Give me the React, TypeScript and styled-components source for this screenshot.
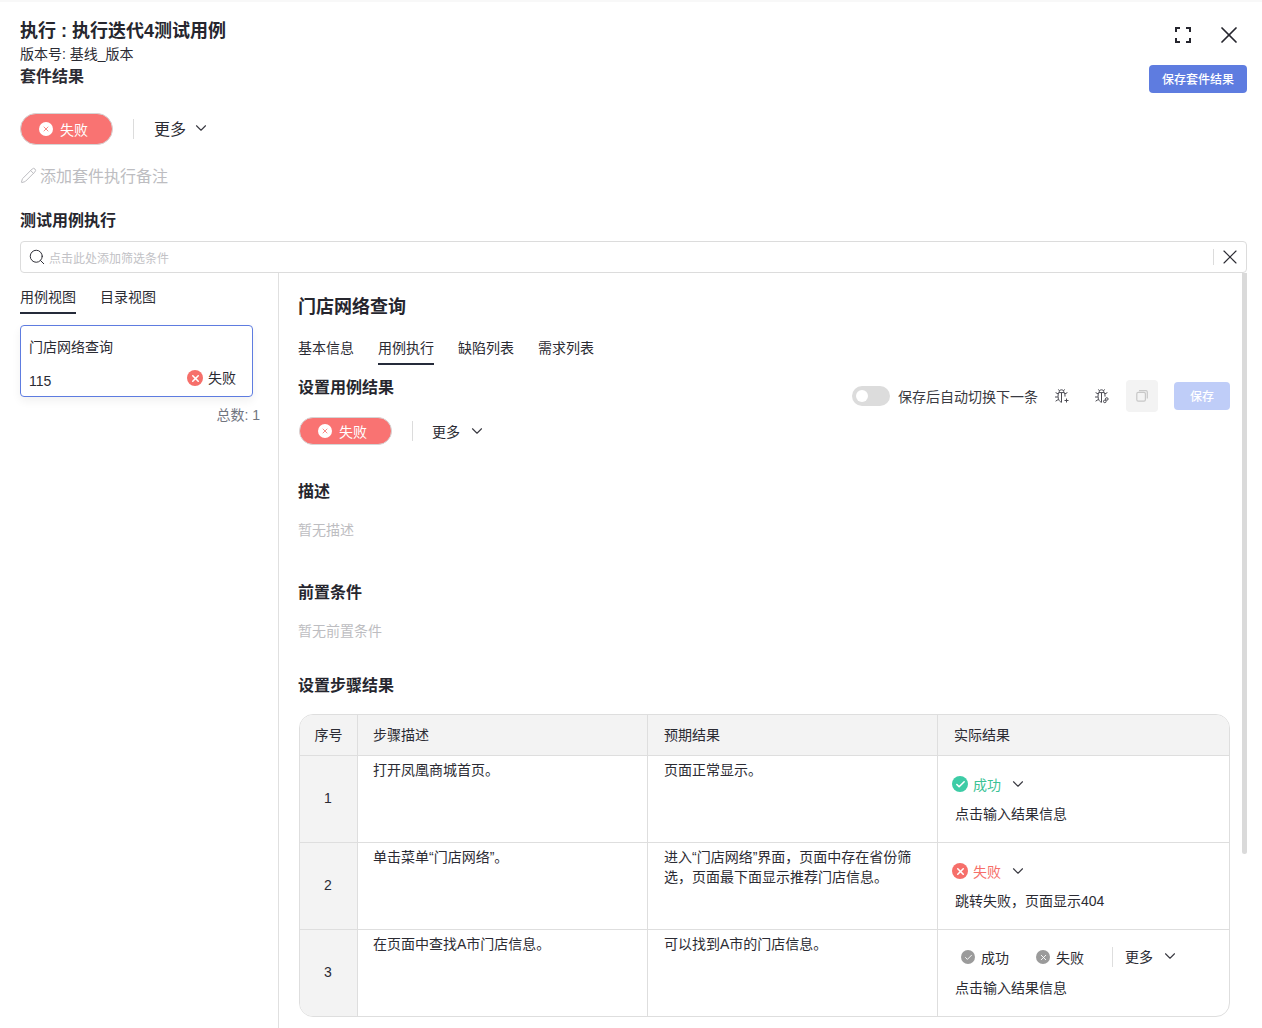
import React from "react";
import styled, { createGlobalStyle } from "styled-components";
import { Check, ChevronDown, Pencil, Search, X } from "lucide-react";

const Global = createGlobalStyle`
  html, body { margin: 0; padding: 0; background: #fff; }
  body { font-family: "Liberation Sans", "Noto Sans CJK SC", sans-serif; color: #2b2b33; }
  * { box-sizing: border-box; }
`;

const Page = styled.div`
  width: 1262px;
  height: 1028px;
  overflow: hidden;
  display: flex;
  flex-direction: column;
  padding: 20px 15px 0 20px;
  border-top: 2px solid #f8f8f8;
`;
const Header = styled.header`
  display: flex;
  justify-content: space-between;
  height: 91px;
`;
const TitleBlock = styled.div`
  display: flex;
  flex-direction: column;
`;
const Title = styled.h1`
  margin: 0;
  font-size: 18px;
  line-height: 18px;
  font-weight: 700;
  color: #26262e;
`;
const Version = styled.div`
  font-size: 14px;
  line-height: 18px;
  margin-top: 5px;
  color: #2b2b33;
`;
const SuiteHeading = styled.div`
  font-size: 16px;
  line-height: 22px;
  font-weight: 700;
  margin-top: 3px;
`;
const HeaderActions = styled.div`
  display: flex;
  flex-direction: column;
  align-items: flex-end;
`;
const WindowIcons = styled.div`
  display: flex;
  align-items: center;
  gap: 23px;
  height: 28px;
  margin: -1px 4px 16px 0;
`;
const PrimaryButton = styled.button<{ $muted?: boolean }>`
  border: none;
  border-radius: 4px;
  height: 28px;
  padding: 0 ${(p) => (p.$muted ? "16px" : "13px")} 2px;
  font: inherit;
  font-size: 12px;
  font-weight: 500;
  color: #fff;
  background: ${(p) => (p.$muted ? "#bfcdf8" : "#5e7ce0")};
`;
const ResultRow = styled.div<{ $compact?: boolean }>`
  display: flex;
  align-items: center;
  height: ${(p) => (p.$compact ? "28px" : "32px")};
  margin-left: ${(p) => (p.$compact ? "1px" : "0")};
`;
const FailPill = styled.div`
  width: 93px;
  height: 100%;
  border-radius: 16px;
  background: #f97372;
  border: 1px solid #d5d5d5;
  color: #fff;
  font-size: 14px;
  display: flex;
  align-items: center;
  padding-left: 18px;
  gap: 7px;
`;
const Divider = styled.div<{ $height: number; $right?: number }>`
  width: 1px;
  height: ${(p) => p.$height}px;
  background: #dcdcdc;
  margin: 0 ${(p) => p.$right ?? 20}px 0 20px;
`;
const More = styled.div<{ $size: number; $gap: number; $lift?: number }>`
  display: flex;
  align-items: center;
  gap: ${(p) => p.$gap}px;
  font-size: ${(p) => p.$size}px;
  color: #2b2b33;
  margin-bottom: ${(p) => p.$lift ?? 0}px;
`;
const NoteRow = styled.div`
  display: flex;
  align-items: center;
  gap: 3px;
  height: 24px;
  margin-top: 18px;
  font-size: 16px;
  color: #bdbdc1;
`;
const SectionTitle = styled.h2<{ $top?: number }>`
  margin: ${(p) => p.$top ?? 0}px 0 0;
  font-size: 16px;
  line-height: 24px;
  font-weight: 700;
  color: #26262e;
`;
const FilterBar = styled.div`
  height: 32px;
  margin-top: 8px;
  display: flex;
  align-items: center;
  border: 1px solid #dcdcdc;
  border-radius: 4px;
  padding: 0 4px 0 7px;
  gap: 3px;
  font-size: 12px;
  color: #c2c2c6;
`;
const FilterText = styled.span`
  flex: 1;
`;
const FilterClear = styled.div`
  height: 16px;
  border-left: 1px solid #dcdcdc;
  padding-left: 4px;
  display: flex;
  align-items: center;
`;
const Body = styled.div`
  flex: 1;
  display: flex;
  min-height: 0;
`;
const LeftPanel = styled.aside`
  width: 259px;
  flex: none;
  border-right: 1px solid #e0e0e0;
  padding-top: 14px;
`;
const TabBar = styled.div<{ $gap: number }>`
  display: flex;
  gap: ${(p) => p.$gap}px;
  font-size: 14px;
`;
const Tab = styled.div<{ $active?: boolean }>`
  height: 27px;
  line-height: 20px;
  color: #2b2b33;
  border-bottom: 2px solid ${(p) => (p.$active ? "#252b3a" : "transparent")};
`;
const CaseCard = styled.div`
  width: 233px;
  height: 72px;
  margin-top: 11px;
  border: 1px solid #5e7ce0;
  border-radius: 4px;
  padding: 11px 8px 0;
  font-size: 14px;
  box-shadow: 0 4px 10px rgba(0, 0, 0, 0.06);
`;
const CaseName = styled.div`
  line-height: 20px;
`;
const CaseMeta = styled.div`
  display: flex;
  justify-content: space-between;
  align-items: flex-start;
  margin-top: 11px;
  padding-right: 8px;
  line-height: 20px;
`;
const CaseId = styled.span`
  margin-top: 3px;
`;
const StatusText = styled.div<{ $color?: string; $gap?: number }>`
  display: flex;
  align-items: center;
  gap: ${(p) => p.$gap ?? 5}px;
  font-size: 14px;
  color: ${(p) => p.$color ?? "#2b2b33"};
`;
const Total = styled.div`
  width: 240px;
  text-align: right;
  margin-top: 9px;
  font-size: 14px;
  line-height: 18px;
  color: #71757f;
`;
const RightPanel = styled.main`
  position: relative;
  flex: 1;
  min-width: 0;
  padding: 22px 17px 0 19px;
`;
const ScrollThumb = styled.div`
  position: absolute;
  top: 0;
  right: 0;
  width: 5px;
  height: 581px;
  background: #dadada;
  border-radius: 0 0 3px 3px;
`;
const CaseTitle = styled.h2`
  margin: 0;
  font-size: 18px;
  line-height: 24px;
  font-weight: 700;
  color: #26262e;
`;
const DetailTabs = styled.div`
  margin-top: 19px;
`;
const ResultHead = styled.div`
  display: flex;
  justify-content: space-between;
  margin-top: 11px;
  height: 41px;
`;
const Toolbar = styled.div`
  display: flex;
  align-items: center;
  height: 32px;
  margin-top: 4px;
`;
const ToggleTrack = styled.div`
  position: relative;
  width: 38px;
  height: 20px;
  border-radius: 10px;
  background: #dcdcdc;
  margin-right: 8px;
`;
const ToggleKnob = styled.div`
  position: absolute;
  left: 4px;
  top: 4px;
  width: 12px;
  height: 12px;
  border-radius: 50%;
  background: #fff;
`;
const ToggleLabel = styled.span`
  font-size: 14px;
  color: #3a3a42;
  margin-right: 16px;
`;
const IconSlot = styled.div<{ $right: number }>`
  width: 16px;
  margin-right: ${(p) => p.$right}px;
  display: flex;
  justify-content: center;
  align-items: center;
`;
const CopyButton = styled.div`
  width: 32px;
  height: 32px;
  border-radius: 4px;
  background: #f3f3f3;
  display: flex;
  align-items: center;
  justify-content: center;
  margin-right: 16px;
`;
const EmptyText = styled.div`
  margin-top: 16px;
  font-size: 14px;
  line-height: 20px;
  color: #bdbdc1;
`;
const StepTable = styled.div`
  margin: 16px 0 0 1px;
  width: 931px;
  height: 303px;
  border: 1px solid #dedede;
  border-radius: 14px;
  overflow: hidden;
  display: grid;
  grid-template-columns: 58px 290px 290px 1fr;
  grid-template-rows: 41px repeat(3, 87px);
  font-size: 14px;
`;
const HeadCell = styled.div<{ $center?: boolean; $last?: boolean; $pad?: number }>`
  background: #f3f3f3;
  border-bottom: 1px solid #dedede;
  border-right: ${(p) => (p.$last ? "none" : "1px solid #dedede")};
  display: flex;
  align-items: center;
  justify-content: ${(p) => (p.$center ? "center" : "flex-start")};
  padding-left: ${(p) => (p.$center ? 0 : p.$pad ?? 15)}px;
  padding-bottom: 2px;
`;
const IndexCell = styled.div<{ $last?: boolean }>`
  background: #f3f3f3;
  border-right: 1px solid #dedede;
  border-bottom: ${(p) => (p.$last ? "none" : "1px solid #dedede")};
  display: flex;
  align-items: center;
  justify-content: center;
  font-size: 14px;
  padding: 0 1px 3px 0;
`;
const TextCell = styled.div<{ $last?: boolean; $pad?: number }>`
  border-right: 1px solid #dedede;
  border-bottom: ${(p) => (p.$last ? "none" : "1px solid #dedede")};
  padding: 4px 15px 0 ${(p) => p.$pad ?? 15}px;
  line-height: 20px;
`;
const ActualCell = styled.div<{ $last?: boolean }>`
  border-bottom: ${(p) => (p.$last ? "none" : "1px solid #dedede")};
  padding-left: 14px;
  display: flex;
  flex-direction: column;
`;
const ActualStatus = styled.div`
  height: 20px;
  margin-top: 18px;
  display: flex;
  align-items: center;
  gap: 8px;
`;
const ActualNote = styled.div<{ $top?: number }>`
  margin: ${(p) => p.$top ?? 10}px 0 0 3px;
  line-height: 20px;
  font-size: 14px;
  color: #2b2b33;
`;
const ChoiceRow = styled.div`
  display: flex;
  align-items: center;
  height: 20px;
  margin-top: 17px;
  padding-left: 9px;
  font-size: 14px;
`;
const ChoiceDivider = styled.div`
  width: 1px;
  height: 20px;
  background: #dedede;
  margin: 0 12px 0 28px;
`;
const ChoiceGap = styled.div`
  width: 27px;
`;

const Dot = styled.span<{ $bg: string; $size: number }>`
  width: ${(p) => p.$size}px;
  height: ${(p) => p.$size}px;
  flex: none;
  border-radius: 50%;
  background: ${(p) => p.$bg};
  display: inline-flex;
  align-items: center;
  justify-content: center;
`;

const FullscreenIcon = () => (
  <svg width="18" height="18" viewBox="0 0 18 18" fill="none" stroke="#26262e" strokeWidth="2">
    <path d="M2 6V2H6M12 2H16V6M16 12V16H12M6 16H2V12" />
  </svg>
);

const BugBase = ({ badge }: { badge: "plus" | "link" }) => (
  <svg width="16" height="16" viewBox="0 0 16 16" fill="none" stroke="#4a4a52" strokeWidth="1">
    <path d="M5.2 4.4C5.2 2.8 6.2 1.8 7.5 1.8S9.8 2.8 9.8 4.4" />
    <path d="M4.6 4.6H10.4C11 6 11.1 7 11 8.6M4.6 4.6C3.8 7 3.8 10.6 5.2 12.6 6 13.6 6.8 14.2 8 14.2M7.5 5V14" />
    <path d="M4.4 1.4 5.6 3M10.6 1.4 9.4 3M1.6 4.6 4.4 6M13.4 4.6 10.6 6M1 9H3.9M1.6 13.2 4.4 11.4" />
    {badge === "plus" ? (
      <path d="M12.5 10.5V14.5M10.5 12.5H14.5" />
    ) : (
      <>
        <circle cx="12.8" cy="11" r="1.3" />
        <circle cx="10.8" cy="13.4" r="1.3" />
      </>
    )}
  </svg>
);

const CopyIcon = () => (
  <svg width="12" height="12" viewBox="0 0 12 12" fill="none" stroke="#c8c8c8" strokeWidth="1.2">
    <rect x="0.8" y="2.4" width="8.6" height="8.8" rx="1.4" />
    <path d="M3 .7H10A1.4 1.4 0 0 1 11.3 2V8.6" />
  </svg>
);

const FailMark = ({ size = 16 }: { size?: number }) => (
  <Dot $bg="#f66f6a" $size={size}>
    <X size={size - 5} color="#fff" strokeWidth={3.4} />
  </Dot>
);
const PillMark = ({ size = 14 }: { size?: number }) => (
  <Dot $bg="#fff" $size={size}>
    <X size={size - 6} color="#f66f6a" strokeWidth={2.4} />
  </Dot>
);
const Chevron = () => <ChevronDown size={18} color="#3a3a42" strokeWidth={1.5} />;

const Pill = () => (
  <FailPill>
    <PillMark />
    失败
  </FailPill>
);

const steps = [
  { id: 1, desc: "打开凤凰商城首页。", expect: "页面正常显示。" },
  { id: 2, desc: "单击菜单“门店网络”。", expect: "进入“门店网络”界面，页面中存在省份筛选，页面最下面显示推荐门店信息。" },
  { id: 3, desc: "在页面中查找A市门店信息。", expect: "可以找到A市的门店信息。" },
];

const Actual = ({ id }: { id: number }) => {
  if (id === 1)
    return (
      <ActualCell>
        <ActualStatus>
          <StatusText $color="#3ac295">
            <Dot $bg="#3dcca6" $size={16}>
              <Check size={11} color="#fff" strokeWidth={3.4} />
            </Dot>
            成功
          </StatusText>
          <Chevron />
        </ActualStatus>
        <ActualNote>点击输入结果信息</ActualNote>
      </ActualCell>
    );
  if (id === 2)
    return (
      <ActualCell>
        <ActualStatus>
          <StatusText $color="#f66f6a">
            <FailMark />
            失败
          </StatusText>
          <Chevron />
        </ActualStatus>
        <ActualNote>跳转失败，页面显示404</ActualNote>
      </ActualCell>
    );
  return (
    <ActualCell $last>
      <ChoiceRow>
        <StatusText $gap={6}>
          <Dot $bg="#9b9b9b" $size={14}>
            <Check size={9} color="#fff" strokeWidth={2.4} />
          </Dot>
          成功
        </StatusText>
        <ChoiceGap />
        <StatusText $gap={6}>
          <Dot $bg="#9b9b9b" $size={14}>
            <X size={9} color="#fff" strokeWidth={2.4} />
          </Dot>
          失败
        </StatusText>
        <ChoiceDivider />
        <More $size={14} $gap={8} $lift={2}>
          更多
          <Chevron />
        </More>
      </ChoiceRow>
      <ActualNote $top={11}>点击输入结果信息</ActualNote>
    </ActualCell>
  );
};

export default function App() {
  return (
    <Page>
      <Global />
      <Header>
        <TitleBlock>
          <Title>执行 : 执行迭代4测试用例</Title>
          <Version>版本号: 基线_版本</Version>
          <SuiteHeading>套件结果</SuiteHeading>
        </TitleBlock>
        <HeaderActions>
          <WindowIcons>
            <FullscreenIcon />
            <X size={28} color="#26262e" strokeWidth={1.5} />
          </WindowIcons>
          <PrimaryButton>保存套件结果</PrimaryButton>
        </HeaderActions>
      </Header>
      <ResultRow>
        <Pill />
        <Divider $height={20} />
        <More $size={16} $gap={6} $lift={2}>
          更多
          <Chevron />
        </More>
      </ResultRow>
      <NoteRow>
        <Pencil size={17} color="#bcbcc0" strokeWidth={1.4} />
        添加套件执行备注
      </NoteRow>
      <SectionTitle $top={22}>测试用例执行</SectionTitle>
      <FilterBar>
        <Search size={18} color="#2b2b33" strokeWidth={1.3} />
        <FilterText>点击此处添加筛选条件</FilterText>
        <FilterClear>
          <X size={24} color="#2b2b33" strokeWidth={1.1} />
        </FilterClear>
      </FilterBar>
      <Body>
        <LeftPanel>
          <TabBar $gap={24}>
            <Tab $active>用例视图</Tab>
            <Tab>目录视图</Tab>
          </TabBar>
          <CaseCard>
            <CaseName>门店网络查询</CaseName>
            <CaseMeta>
              <CaseId>115</CaseId>
              <StatusText>
                <FailMark />
                失败
              </StatusText>
            </CaseMeta>
          </CaseCard>
          <Total>总数: 1</Total>
        </LeftPanel>
        <RightPanel>
          <ScrollThumb />
          <CaseTitle>门店网络查询</CaseTitle>
          <DetailTabs>
            <TabBar $gap={24}>
              <Tab>基本信息</Tab>
              <Tab $active>用例执行</Tab>
              <Tab>缺陷列表</Tab>
              <Tab>需求列表</Tab>
            </TabBar>
          </DetailTabs>
          <ResultHead>
            <SectionTitle>设置用例结果</SectionTitle>
            <Toolbar>
              <ToggleTrack>
                <ToggleKnob />
              </ToggleTrack>
              <ToggleLabel>保存后自动切换下一条</ToggleLabel>
              <IconSlot $right={24}>
                <BugBase badge="plus" />
              </IconSlot>
              <IconSlot $right={16}>
                <BugBase badge="link" />
              </IconSlot>
              <CopyButton>
                <CopyIcon />
              </CopyButton>
              <PrimaryButton $muted>保存</PrimaryButton>
            </Toolbar>
          </ResultHead>
          <ResultRow $compact>
            <Pill />
            <Divider $height={20} $right={19} />
            <More $size={14} $gap={8}>
              更多
              <Chevron />
            </More>
          </ResultRow>
          <SectionTitle $top={35}>描述</SectionTitle>
          <EmptyText>暂无描述</EmptyText>
          <SectionTitle $top={41}>前置条件</SectionTitle>
          <EmptyText>暂无前置条件</EmptyText>
          <SectionTitle $top={33}>设置步骤结果</SectionTitle>
          <StepTable>
            <HeadCell $center>序号</HeadCell>
            <HeadCell>步骤描述</HeadCell>
            <HeadCell $pad={16}>预期结果</HeadCell>
            <HeadCell $last $pad={16}>实际结果</HeadCell>
            {steps.map((s) => (
              <React.Fragment key={s.id}>
                <IndexCell $last={s.id === 3}>{s.id}</IndexCell>
                <TextCell $last={s.id === 3}>{s.desc}</TextCell>
                <TextCell $last={s.id === 3} $pad={16}>{s.expect}</TextCell>
                <Actual id={s.id} />
              </React.Fragment>
            ))}
          </StepTable>
        </RightPanel>
      </Body>
    </Page>
  );
}
